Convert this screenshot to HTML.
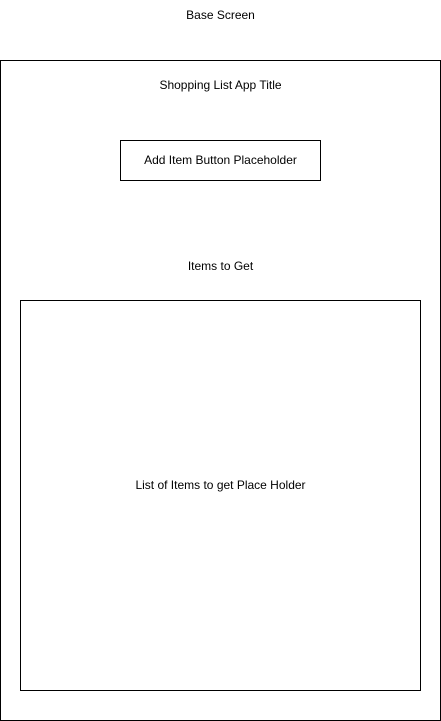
<!DOCTYPE html>
<html><head><style>
body{margin:0;width:441px;height:721px;background:#fff;position:relative;font-family:"Liberation Sans",Arial,sans-serif;font-size:12px;color:#000;overflow:hidden}
.b{position:absolute;border:1px solid #000;box-sizing:border-box}
.t{position:absolute;left:0;width:441px;text-align:center;line-height:14px}
</style></head><body>
<div class="t" style="top:8px">Base Screen</div>
<div class="b" style="left:0;top:60px;width:441px;height:661px"></div>
<div class="t" style="top:78px">Shopping List App Title</div>
<div class="b" style="left:120px;top:140px;width:201px;height:41px"></div>
<div class="t" style="top:153px">Add Item Button Placeholder</div>
<div class="t" style="top:259px">Items to Get</div>
<div class="b" style="left:20px;top:300px;width:401px;height:391px"></div>
<div class="t" style="top:478px">List of Items to get Place Holder</div>
</body></html>
